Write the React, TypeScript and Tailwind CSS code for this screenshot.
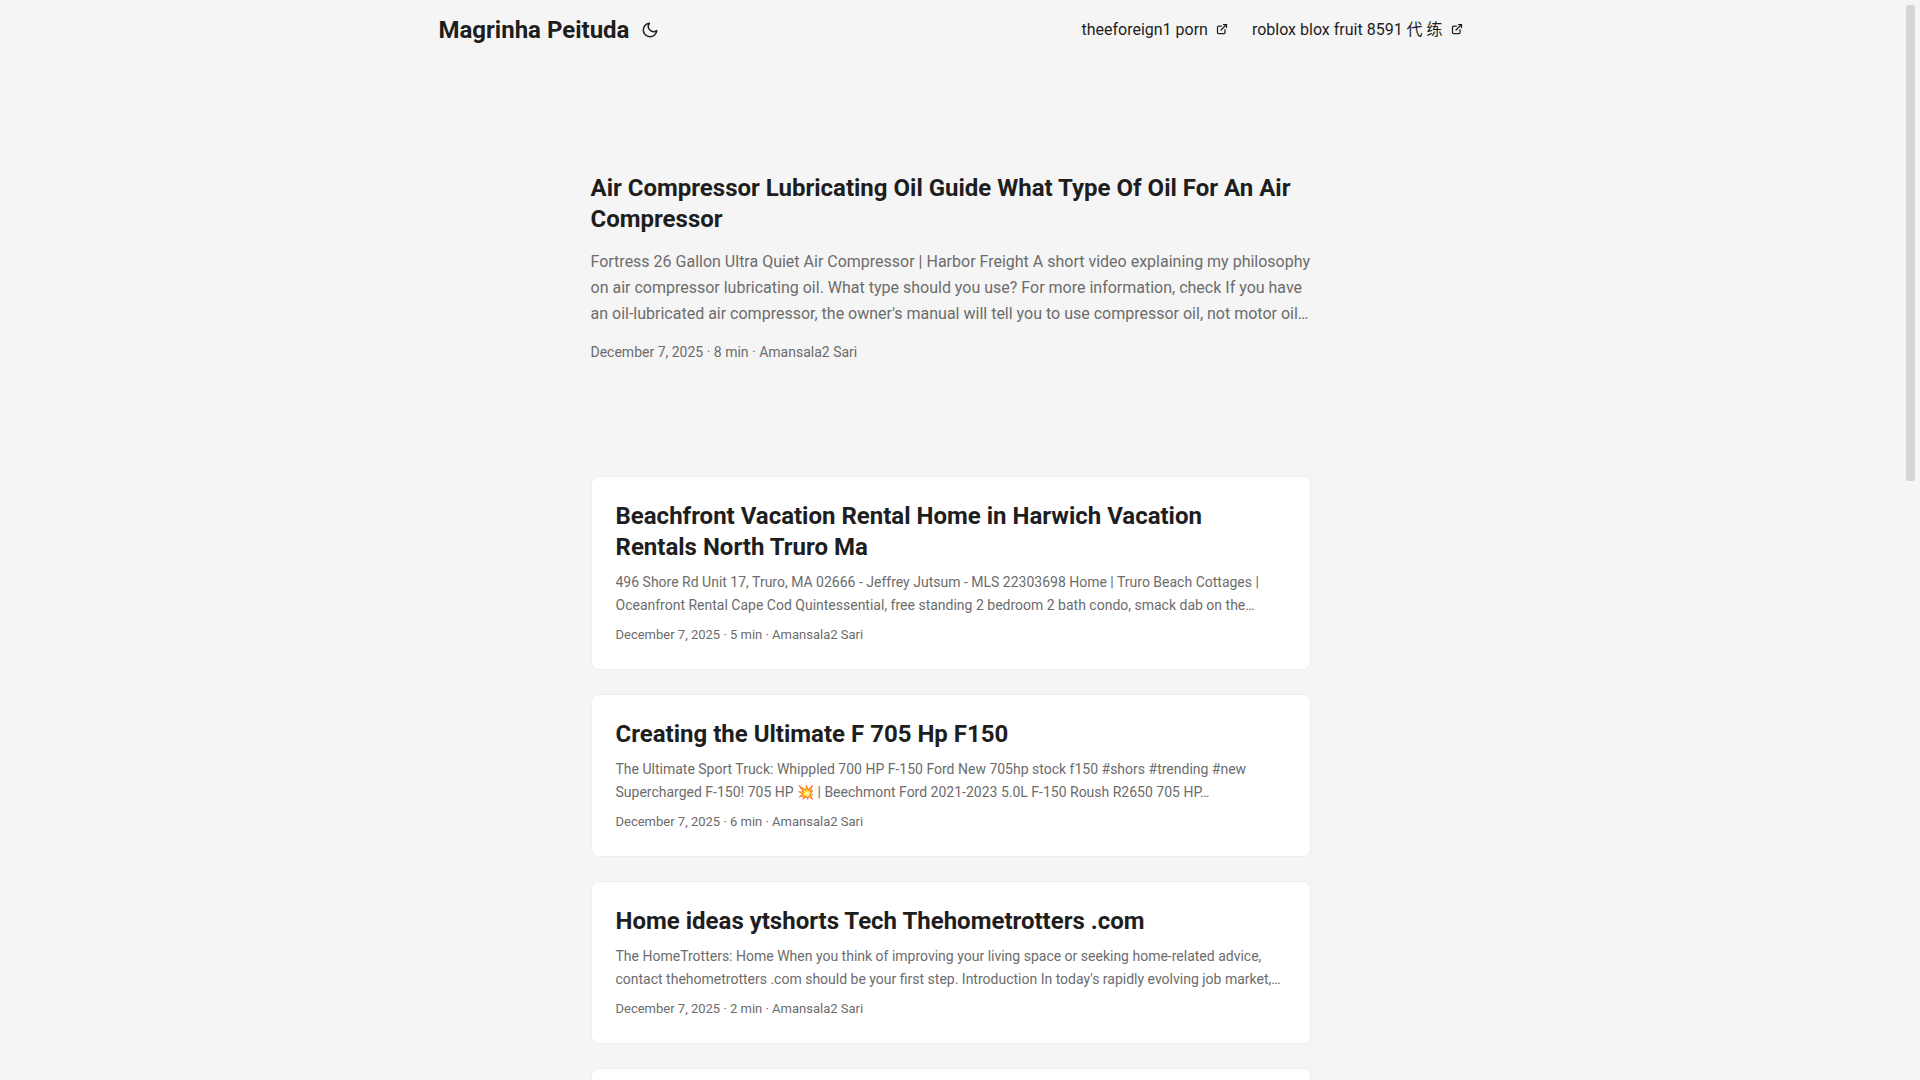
import { useState } from "react";
import clsx from "clsx";

type Post = { title: string; summary: string; meta: string };

const menu = ["theeforeign1 porn", "roblox blox fruit 8591 代 练"];

const featured: Post = {
  title: "Air Compressor Lubricating Oil Guide What Type Of Oil For An Air Compressor",
  summary:
    "Fortress 26 Gallon Ultra Quiet Air Compressor | Harbor Freight A short video explaining my philosophy on air compressor lubricating oil. What type should you use? For more information, check If you have an oil-lubricated air compressor, the owner's manual will tell you to use compressor oil, not motor oil…",
  meta: "December 7, 2025 · 8 min · Amansala2 Sari",
};

const posts: Post[] = [
  {
    title: "Beachfront Vacation Rental Home in Harwich Vacation Rentals North Truro Ma",
    summary:
      "496 Shore Rd Unit 17, Truro, MA 02666 - Jeffrey Jutsum - MLS 22303698 Home | Truro Beach Cottages | Oceanfront Rental Cape Cod Quintessential, free standing 2 bedroom 2 bath condo, smack dab on the…",
    meta: "December 7, 2025 · 5 min · Amansala2 Sari",
  },
  {
    title: "Creating the Ultimate F 705 Hp F150",
    summary:
      "The Ultimate Sport Truck: Whippled 700 HP F-150 Ford New 705hp stock f150 #shors #trending #new Supercharged F-150! 705 HP 💥 | Beechmont Ford 2021-2023 5.0L F-150 Roush R2650 705 HP…",
    meta: "December 7, 2025 · 6 min · Amansala2 Sari",
  },
  {
    title: "Home ideas ytshorts Tech Thehometrotters .com",
    summary:
      "The HomeTrotters: Home When you think of improving your living space or seeking home-related advice, contact thehometrotters .com should be your first step. Introduction In today's rapidly evolving job market,…",
    meta: "December 7, 2025 · 2 min · Amansala2 Sari",
  },
];

const cardClass = "rounded-lg border border-[#eeeeee] bg-white";

function MoonIcon() {
  return (
    <svg width="18" height="18" viewBox="0 0 24 24" fill="none" stroke="currentColor" strokeWidth="2" strokeLinecap="round" strokeLinejoin="round">
      <path d="M21 12.79A9 9 0 1 1 11.21 3 7 7 0 0 0 21 12.79z" />
    </svg>
  );
}

function ExternalIcon() {
  return (
    <svg width="12" height="12" viewBox="0 0 24 24" fill="none" stroke="currentColor" strokeWidth="2.5" strokeLinecap="round" strokeLinejoin="round" className="inline-block align-baseline">
      <path d="M18 13v6a2 2 0 0 1-2 2H5a2 2 0 0 1-2-2V8a2 2 0 0 1 2-2h6" />
      <path d="M15 3h6v6" />
      <path d="M10 14L21 3" />
    </svg>
  );
}

function Header({ onToggle }: { onToggle: () => void }) {
  return (
    <header>
      <nav className="mx-auto flex max-w-[1072px] flex-wrap justify-between px-6 leading-[60px]">
        <div className="flex items-center">
          <a href="#" className="text-2xl leading-[60px] font-bold">
            Magrinha Peituda
          </a>
          <button type="button" aria-label="Toggle theme" onClick={onToggle} className="ml-1 flex h-[60px] cursor-pointer items-center px-2">
            <MoonIcon />
          </button>
        </div>
        <ul className="flex gap-6">
          {menu.map((label) => (
            <li key={label}>
              <a href="#">
                {label}&nbsp; <ExternalIcon />
              </a>
            </li>
          ))}
        </ul>
      </nav>
    </header>
  );
}

function FeaturedPost({ post }: { post: Post }) {
  return (
    <article className="mt-6 mb-12 flex min-h-80 flex-col justify-center">
      <h1 className="text-2xl leading-[31px] font-bold">
        <a href="#">{post.title}</a>
      </h1>
      <p className="my-3.5 leading-[26px] text-[#6c6c6c]">{post.summary}</p>
      <footer className="text-sm leading-[22px] text-[#6c6c6c]">{post.meta}</footer>
    </article>
  );
}

function PostCard({ post }: { post: Post }) {
  return (
    <article className={clsx(cardClass, "p-6")}>
      <h2 className="text-2xl leading-[31px] font-bold">
        <a href="#">{post.title}</a>
      </h2>
      <p className="my-2 text-sm leading-[23px] text-[#6c6c6c]">{post.summary}</p>
      <footer className="text-[13px] leading-5 text-[#6c6c6c]">{post.meta}</footer>
    </article>
  );
}

export default function App() {
  const [dark, setDark] = useState(false);

  return (
    <div
      className={clsx(
        "flex h-screen overflow-hidden bg-[#f5f5f5] font-[Roboto,'Noto_Sans_CJK_SC',sans-serif] text-base text-[#1e1e1e]",
        dark && "invert",
      )}
    >
      <div className="min-w-0 flex-1">
        <Header onToggle={() => setDark(!dark)} />
        <main className="mx-auto max-w-3xl p-6">
          <FeaturedPost post={featured} />
          <div className="flex flex-col gap-6">
            {posts.map((post) => (
              <PostCard key={post.title} post={post} />
            ))}
            <div className={clsx(cardClass, "h-40")} />
          </div>
        </main>
      </div>
      {/* scroll thumb */}
      <div className="w-[19px] shrink-0 p-[5px]">
        <div className="h-[44.5%] rounded-xs bg-[#d6d6d6]" />
      </div>
    </div>
  );
}
